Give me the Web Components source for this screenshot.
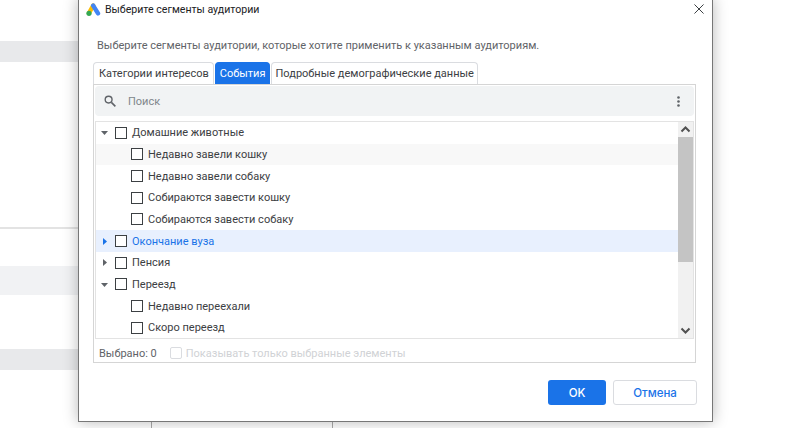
<!DOCTYPE html>
<html lang="ru">
<head>
<meta charset="utf-8">
<style>
  html, body { margin: 0; height: 100%; background: #fff; overflow: hidden; }
  body { font-family: Roboto, "Liberation Sans", sans-serif; }
</style>
</head>
<body>
<page-backdrop></page-backdrop>
<segment-dialog heading="Выберите сегменты аудитории">
  <tree-row level="0" caret="down">Домашние животные</tree-row>
  <tree-row level="1" shade>Недавно завели кошку</tree-row>
  <tree-row level="1">Недавно завели собаку</tree-row>
  <tree-row level="1">Собираются завести кошку</tree-row>
  <tree-row level="1">Собираются завести собаку</tree-row>
  <tree-row level="0" caret="right" active>Окончание вуза</tree-row>
  <tree-row level="0" caret="right">Пенсия</tree-row>
  <tree-row level="0" caret="down">Переезд</tree-row>
  <tree-row level="1">Недавно переехали</tree-row>
  <tree-row level="1">Скоро переезд</tree-row>
</segment-dialog>

<script>
class PageBackdrop extends HTMLElement {
  constructor() {
    super()
    this.attachShadow({ mode: 'open' })
    this.shadowRoot.innerHTML = `
      <style>
        :host { display: grid; width: 800px; height: 428px; grid-template-rows: 41px 21px 165px 2px 37px 29px 54px 21px 52px 6px; }
        .dark { background: #e8e9eb; }
        .light { background: #f1f2f4; }
        .rule { background: #e3e3e3; }
        .foot { display: flex; }
        .foot i { width: 1px; background: #aaa; margin-left: 151px; }
        .foot i + i { margin-left: 180px; }
        .side { width: 713px; }
      </style>
      <div></div><div class="dark side"></div><div></div><div class="rule side"></div><div></div>
      <div class="light side"></div><div></div><div class="dark side"></div><div></div>
      <div class="foot"><i></i><i></i></div>`
  }
}

class TreeRow extends HTMLElement {
  constructor() {
    super()
    this.attachShadow({ mode: 'open' })
    const caret = this.getAttribute('caret')
    const level = this.getAttribute('level')
    let arrow = ''
    if (caret === 'down') arrow = '<path d="M0 2h7L3.5 6z"/>'
    if (caret === 'right') arrow = '<path d="M2 0v7l4-3.5z"/>'
    this.shadowRoot.innerHTML = `
      <style>
        :host { display: flex; align-items: center; height: 21.67px; color: #3c4043; font-size: 11px; padding-left: ${level === '1' ? 35 : 5}px; }
        :host([shade]) { background: #f8f8f8; }
        :host([active]) { background: #e8f0fe; color: #1a73e8; }
        svg { width: 7px; height: 7px; fill: #5f6368; margin-right: 7px; flex: none; }
        :host([active]) svg { fill: #1a73e8; }
        .box { width: 10px; height: 10px; border: 1px solid #3c4043; margin-right: 5px; background: #fff; flex: none; }
      </style>
      ${level === '0' ? `<svg viewBox="0 0 7 7">${arrow}</svg>` : ''}
      <span class="box"></span>
      <span><slot></slot></span>`
  }
}

class SegmentDialog extends HTMLElement {
  constructor() {
    super()
    this.attachShadow({ mode: 'open' })
    this.shadowRoot.innerHTML = `
      <style>
        :host { position: absolute; left: 78px; top: -2px; width: 633px; height: 422px; display: flex; flex-direction: column; background: #fff; border: 1px solid #777; box-shadow: 0 0 14px rgba(0,0,0,.28); color: #3c4043; font-size: 11px; }
        .title { display: flex; align-items: center; height: 20px; padding-left: 7px; color: #202124; font-size: 10.6px; flex: none; }
        .logo { width: 15px; height: 13px; margin-right: 4px; flex: none; }
        .title span { flex: 1; }
        .close { width: 10px; height: 10px; margin-right: 8px; flex: none; }
        .intro { margin: 20px 0 0 18px; height: 20px; line-height: 14px; color: #5f6368; }
        .tabs { display: flex; margin-left: 14px; height: 22px; margin-top: 3px; gap: 1px; flex: none; }
        .tab { display: flex; align-items: center; padding: 0 3px 0 4px; border: 1px solid #dadce0; border-bottom: 0; border-radius: 4px 4px 0 0; color: #3c4043; }
        .tab:first-child { padding: 0 4px 0 5px; }
        .tab.on { background: #1a73e8; border-color: #1a73e8; color: #fff; }
        .panel { margin-left: 14px; width: 603px; height: 279px; box-sizing: border-box; border: 1px solid #d5d5d5; padding: 1px 1px 0; display: flex; flex-direction: column; flex: none; }
        .search { display: flex; align-items: center; height: 30px; background: #f1f3f4; border-radius: 4px; padding: 0 14px 0 9px; flex: none; color: #80868b; }
        .search .mag { width: 12px; height: 12px; margin-right: 12px; flex: none; }
        .search span { flex: 1; }
        .dots { width: 3px; height: 11px; flex: none; }
        .tree { margin-top: 5px; height: 218px; box-sizing: border-box; border: 1px solid #e3e3e3; display: flex; flex: none; }
        .rows { flex: 1; min-width: 0; overflow: hidden; }
        .bar { width: 15px; background: #f1f1f1; display: flex; flex-direction: column; align-items: center; flex: none; }
        .bar svg { width: 15px; height: 15px; flex: none; }
        .thumb { width: 15px; height: 125px; background: #c4c4c4; flex: none; }
        .grow { flex: 1; }
        .foot { display: flex; align-items: center; flex: 1; padding: 5px 0 0 4px; color: #5f6368; }
        .foot .chk { width: 12px; height: 12px; box-sizing: border-box; border: 1px solid #dadce0; border-radius: 2px; margin: 0 4px 0 13px; }
        .foot .off { color: #d0d2d5; }
        .actions { display: flex; justify-content: flex-end; gap: 7px; margin: 17px 15px 0 0; flex: none; }
        .btn { display: flex; align-items: center; justify-content: center; height: 25px; box-sizing: border-box; border-radius: 3px; font-family: Inter, Roboto, sans-serif; font-size: 11.5px; font-weight: 500; }
        .ok { width: 58px; background: #1a73e8; color: #fff; }
        .cancel { width: 84px; background: #fff; border: 1px solid #dadce0; color: #1a73e8; }
      </style>
      <div class="title">
        <svg class="logo" viewBox="0 0 15 13" fill="none" stroke-linecap="round" stroke-width="4.4">
          <path d="M7.2 2.6 3 10" stroke="#fbbc04"/>
          <path d="M7.2 2.6 12 10.4" stroke="#4285f4"/>
          <circle cx="3" cy="10.3" r="2.6" fill="#34a853" stroke="none"/>
        </svg>
        <span>${this.getAttribute('heading')}</span>
        <svg class="close" viewBox="0 0 11 11"><path d="M.5.5l10 10M10.5.5l-10 10" stroke="#3c4043" stroke-width="1.1" fill="none"/></svg>
      </div>
      <div class="intro">Выберите сегменты аудитории, которые хотите применить к указанным аудиториям.</div>
      <div class="tabs">
        <div class="tab">Категории интересов</div>
        <div class="tab on">События</div>
        <div class="tab">Подробные демографические данные</div>
      </div>
      <div class="panel">
        <div class="search">
          <svg class="mag" viewBox="0 0 13 13"><circle cx="5" cy="5" r="3.7" fill="none" stroke="#5f6368" stroke-width="1.5"/><path d="M8 8l4.3 4.3" stroke="#5f6368" stroke-width="1.7"/></svg>
          <span>Поиск</span>
          <svg class="dots" viewBox="0 0 3 11" fill="#5f6368"><circle cx="1.5" cy="1.5" r="1.3"/><circle cx="1.5" cy="5.5" r="1.3"/><circle cx="1.5" cy="9.5" r="1.3"/></svg>
        </div>
        <div class="tree">
          <div class="rows"><slot></slot></div>
          <div class="bar">
            <svg viewBox="0 0 15 15"><path d="M3.5 9.5l4-4 4 4" fill="none" stroke="#505050" stroke-width="2"/></svg>
            <div class="thumb"></div>
            <div class="grow"></div>
            <svg viewBox="0 0 15 15"><path d="M3.5 5.5l4 4 4-4" fill="none" stroke="#505050" stroke-width="2"/></svg>
          </div>
        </div>
        <div class="foot">
          <span>Выбрано: 0</span>
          <span class="chk"></span>
          <span class="off">Показывать только выбранные элементы</span>
        </div>
      </div>
      <div class="actions">
        <div class="btn ok">OK</div>
        <div class="btn cancel">Отмена</div>
      </div>`
  }
}

window.customElements.define('page-backdrop', PageBackdrop)
window.customElements.define('tree-row', TreeRow)
window.customElements.define('segment-dialog', SegmentDialog)
</script>
</body>
</html>
